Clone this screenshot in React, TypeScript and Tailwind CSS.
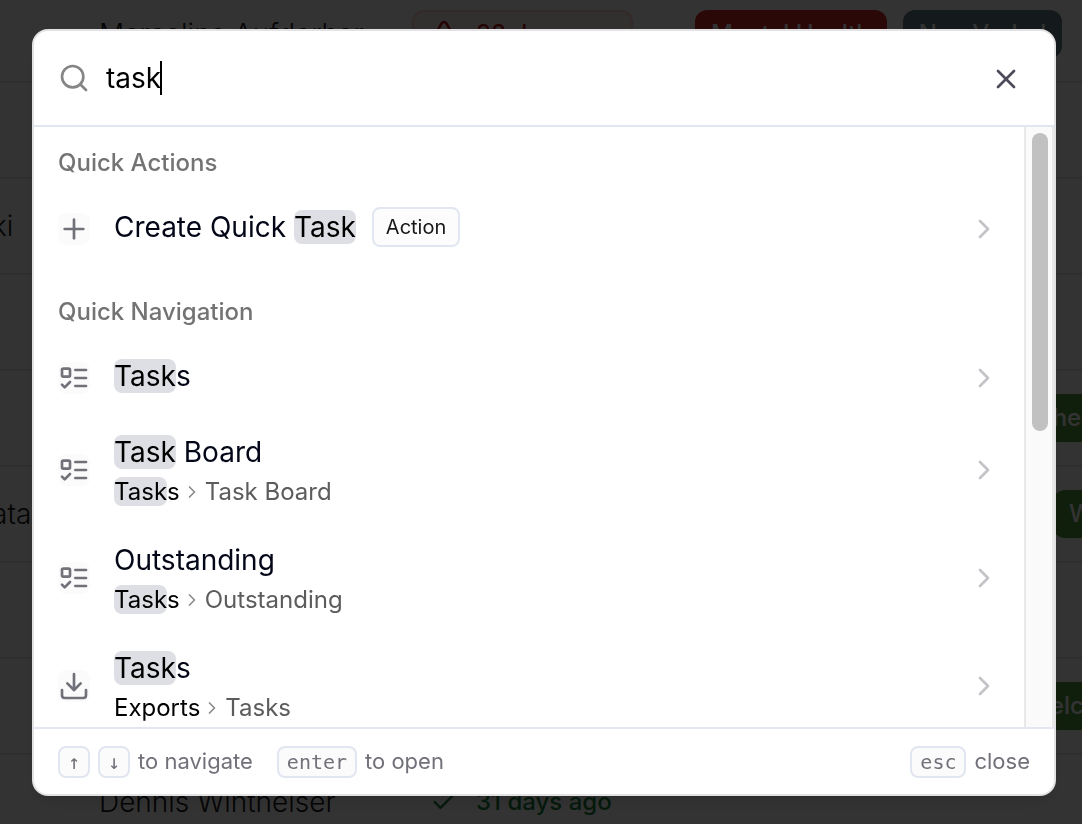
import type { ReactNode } from 'react';
import { Check, ChevronRight, Download, Plus, Search, TriangleAlert, X } from 'lucide-react';

type Tag = { label: string; className: string };

type Patient = {
  left?: string;
  name?: string;
  overdue?: string;
  done?: string;
  tags?: Tag[];
};

const patients: Patient[] = [
  {
    name: 'Marcelina Aufderhar',
    overdue: '38 days ago',
    tags: [
      { label: 'Mental Health', className: 'bg-[#d42a2a]' },
      { label: 'Non Verbal', className: 'ml-4 bg-[#647f89]' },
    ],
  },
  {},
  { left: 'ki' },
  {},
  { tags: [{ label: 'Therapy', className: 'ml-[326px] bg-[#529a3c]' }] },
  { left: 'ata', tags: [{ label: 'Welcome', className: 'ml-[358px] bg-[#529a3c]' }] },
  {},
  { tags: [{ label: 'Welcome', className: 'ml-[316px] bg-[#529a3c]' }] },
  { name: 'Dennis Wintheiser', done: '31 days ago' },
];

function ListTodoIcon() {
  return (
    <svg
      viewBox="0 0 24 24"
      fill="none"
      stroke="currentColor"
      strokeWidth="2"
      strokeLinecap="round"
      strokeLinejoin="round"
      className="size-8"
      aria-hidden="true"
    >
      <rect x="3" y="5" width="6" height="6" rx="1" />
      <path d="m3 17 2 2 4-4" />
      <path d="M13 6h8" />
      <path d="M13 12h8" />
      <path d="M13 18h8" />
    </svg>
  );
}

function Highlight({ text, query }: { text: string; query: string }) {
  const start = text.toLowerCase().indexOf(query.toLowerCase());
  if (start < 0) return <>{text}</>;
  const end = start + query.length;
  return (
    <>
      {text.slice(0, start)}
      <mark className="rounded-lg bg-[#dedfe4] text-black">{text.slice(start, end)}</mark>
      {text.slice(end)}
    </>
  );
}

type ResultProps = {
  icon: ReactNode;
  title: string;
  badge?: string;
  path?: [string, string];
};

function Result({ icon, title, badge, path }: ResultProps) {
  return (
    <li>
      <button type="button" className="flex w-full items-center gap-6 px-6 py-4 text-left">
        <span className="size-8 shrink-0 rounded-lg bg-[#fbfbfb] text-[#71717a]">{icon}</span>
        <span className="min-w-0 flex-1">
          <span className="mb-1 flex h-10 items-center gap-4 text-[28px] leading-10 text-[#020617]">
            <span>
              <Highlight text={title} query="task" />
            </span>
            {badge && (
              <span className="flex h-10 items-center rounded-lg border-2 border-[#e2e6f1] bg-[#fcfcfc] px-3 text-xl text-[#18181b]">
                {badge}
              </span>
            )}
          </span>
          {path && (
            <span className="flex items-center gap-[3px] text-2xl leading-8">
              <span className="text-black">
                <Highlight text={path[0]} query="task" />
              </span>
              <ChevronRight className="size-5 -ml-px text-[#8a8a8a]" />
              <span className="text-[#5c5c5c]">{path[1]}</span>
            </span>
          )}
        </span>
        <ChevronRight className="size-8 shrink-0 text-[#c4c4c8]" />
      </button>
    </li>
  );
}

function SectionTitle({ children }: { children: ReactNode }) {
  return (
    <h2 className="flex h-16 items-center px-6 pt-2 text-2xl font-medium text-[#737373]">{children}</h2>
  );
}

function Key({ children }: { children: ReactNode }) {
  return (
    <kbd className="flex h-8 min-w-8 items-center justify-center rounded-lg border-2 border-[#e2e6f1] bg-[#fbfbfc] px-2 font-['DejaVu_Sans_Mono',monospace] text-xl leading-none">
      {children}
    </kbd>
  );
}

function PatientTable() {
  return (
    <table className="-mt-3.5 w-full table-fixed border-collapse text-[28px] font-light whitespace-nowrap text-[#18181b]">
      <colgroup>
        <col className="w-[99px]" />
        <col className="w-[313px]" />
        <col className="w-[283px]" />
        <col />
      </colgroup>
      <tbody>
        {patients.map((patient, i) => (
          <tr key={i} className="h-24 border-b-2 border-[#e4e4e7]">
            <td>
              <div className="-ml-2">{patient.left}</div>
            </td>
            <td>{patient.name}</td>
            <td className="text-2xl font-medium">
              {patient.overdue && (
                <span className="inline-flex h-12 items-center gap-4 rounded-xl border-2 border-[#fecaca] bg-[#f7f0ea] px-3.5 text-[#b91c1c]">
                  <TriangleAlert className="size-8" />
                  {patient.overdue}
                </span>
              )}
              {patient.done && (
                <span className="inline-flex h-12 items-center gap-4.5 px-4.5 text-[#16803c]">
                  <Check className="size-7" />
                  {patient.done}
                </span>
              )}
            </td>
            <td>
              <div className="flex">
                {patient.tags?.map((tag) => (
                  <span
                    key={tag.label}
                    className={`flex h-12 items-center rounded-xl px-4 text-2xl font-medium text-white ${tag.className}`}
                  >
                    {tag.label}
                  </span>
                ))}
              </div>
            </td>
          </tr>
        ))}
      </tbody>
    </table>
  );
}

export default function App() {
  return (
    <div className="h-screen overflow-hidden bg-white font-[Inter,sans-serif]">
      <PatientTable />

      <div className="fixed inset-0 flex bg-black/80 pt-[29px] pr-[26px] pb-7 pl-8">
        <div
          role="dialog"
          aria-label="Search"
          className="flex min-w-0 flex-1 flex-col overflow-hidden rounded-2xl border-2 border-[#e2e2e4] bg-white shadow-lg"
        >
          <div className="flex h-24 shrink-0 items-center gap-4 border-b-2 border-[#e2e6f1] px-6">
            <Search className="size-8 shrink-0 text-[#858585]" />
            <div className="relative flex-1">
              <input
                type="text"
                aria-label="Search"
                defaultValue="task"
                className="block h-10 w-full bg-transparent text-[28px] text-black outline-none"
              />
              <span className="absolute inset-y-[3px] left-[54px] w-0.5 bg-black" />
            </div>
            <button type="button" aria-label="Close" className="mt-0.5 mr-2 text-[#4b4b5a]">
              <X className="size-8" />
            </button>
          </div>

          <div className="flex min-h-0 flex-1">
            <div className="min-w-0 flex-1 overflow-hidden">
              <SectionTitle>Quick Actions</SectionTitle>
              <ul className="mb-[9px]">
                <Result icon={<Plus className="size-8" />} title="Create Quick Task" badge="Action" />
              </ul>
              <SectionTitle>Quick Navigation</SectionTitle>
              <ul>
                <Result icon={<ListTodoIcon />} title="Tasks" />
                <Result icon={<ListTodoIcon />} title="Task Board" path={['Tasks', 'Task Board']} />
                <Result icon={<ListTodoIcon />} title="Outstanding" path={['Tasks', 'Outstanding']} />
                <Result icon={<Download className="size-8" />} title="Tasks" path={['Exports', 'Tasks']} />
              </ul>
            </div>
            <div className="w-[30px] border-x-2 border-[#e9e9e9] bg-[#fafafa] px-1.5 pt-1.5">
              <div className="h-[298px] w-4 rounded-full bg-[#c1c1c1]" />
            </div>
          </div>

          <div className="flex shrink-0 items-center border-t-2 border-[#e2e6f1] px-6 pt-[17px] pb-4 text-[22px] leading-[30px] text-[#71717a]">
            <div className="flex items-start gap-2">
              <Key>↑</Key>
              <Key>↓</Key>
              <span>to navigate</span>
            </div>
            <div className="ml-6 flex items-start gap-2">
              <Key>enter</Key>
              <span>to open</span>
            </div>
            <div className="ml-auto flex items-start gap-2">
              <Key>esc</Key>
              <span>close</span>
            </div>
          </div>
        </div>
      </div>
    </div>
  );
}
